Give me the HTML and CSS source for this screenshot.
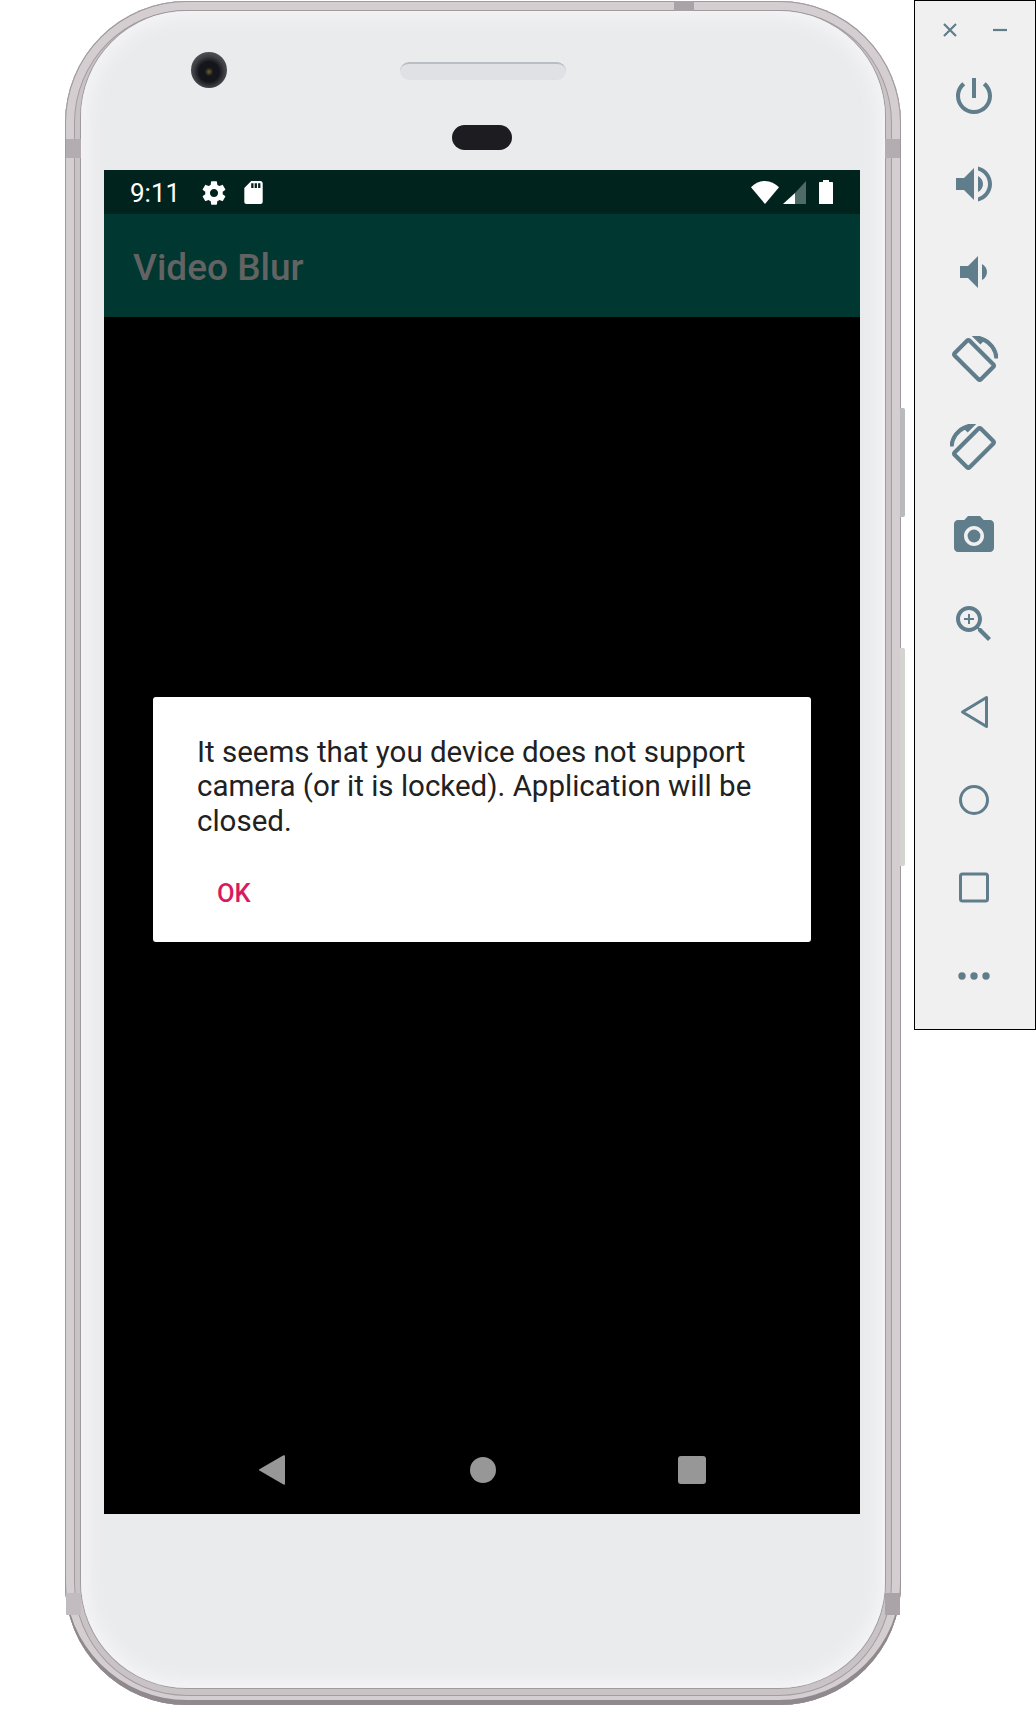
FILE: index.html
```html
<!DOCTYPE html>
<html lang="en">
<head>
    <meta charset="UTF-8">
    <meta name="viewport" content="width=device-width, initial-scale=1.0">
    <title>Video Blur</title>
    <link rel="stylesheet" href="styles.css">
</head>
<body>
    <div class="device">
        <!-- side buttons and antenna bands sit over the frame -->
        <span class="side-btn power-btn"></span>
        <span class="side-btn volume-btn"></span>
        <span class="band band-tl"></span>
        <span class="band band-tr"></span>
        <span class="band band-bl"></span>
        <span class="band band-br"></span>
        <span class="band-top"></span>

        <div class="bezel">
            <div class="bezel-top">
                <span class="camera"></span>
                <span class="speaker"></span>
                <span class="sensor"></span>
            </div>

            <div class="screen">
                <div class="status-bar">
                    <span class="time">9:11</span>
                    <svg class="gear" viewBox="0 0 24 24"><path d="M19.43 12.98c.04-.32.07-.64.07-.98s-.03-.66-.07-.98l2.11-1.65c.19-.15.24-.42.12-.64l-2-3.46c-.12-.22-.39-.3-.61-.22l-2.49 1c-.52-.4-1.08-.73-1.69-.98l-.38-2.65C14.46 2.18 14.25 2 14 2h-4c-.25 0-.46.18-.49.42l-.38 2.65c-.61.25-1.17.59-1.69.98l-2.49-1c-.23-.09-.49 0-.61.22l-2 3.46c-.13.22-.07.49.12.64l2.11 1.65c-.04.32-.07.65-.07.98s.03.66.07.98l-2.11 1.65c-.19.15-.24.42-.12.64l2 3.46c.12.22.39.3.61.22l2.49-1c.52.4 1.08.73 1.69.98l.38 2.65c.03.24.24.42.49.42h4c.25 0 .46-.18.49-.42l.38-2.65c.61-.25 1.17-.59 1.69-.98l2.49 1c.23.09.49 0 .61-.22l2-3.46c.12-.22.07-.49-.12-.64l-2.11-1.65zM12 15.5c-1.93 0-3.5-1.57-3.5-3.5s1.57-3.5 3.5-3.5 3.5 1.57 3.5 3.5-1.57 3.5-3.5 3.5z"/></svg>
                    <svg class="sd" viewBox="4 2 16 20"><path d="M18 2h-8L4.02 8 4 20c0 1.1.9 2 2 2h12c1.1 0 2-.9 2-2V4c0-1.1-.9-2-2-2zm-6 6h-2V4h2v4zm3 0h-2V4h2v4zm3 0h-2V4h2v4z"/></svg>
                    <span class="status-right">
                        <svg class="wifi" viewBox="0 0 28 23"><path d="M14 23 0 6.2C3.8 2.4 8.6 0 14 0s10.2 2.4 14 6.2z"/></svg>
                        <svg class="signal" viewBox="0 0 23 23"><path d="M12 12 0 23h12z"/><path class="signal-off" d="M23 0 12 12v11h11z"/></svg>
                        <svg class="battery" viewBox="0 0 14 24"><path d="M4 2V0h6v2h3c.6 0 1 .4 1 1v21H0V3c0-.6.4-1 1-1z"/></svg>
                    </span>
                </div>
                <div class="app-bar">Video Blur</div>
                <div class="content">
                    <div class="dialog">
                        <p class="dialog-text">It seems that you device does not support camera (or it is locked). Application will be closed.</p>
                        <span class="dialog-btn">OK</span>
                    </div>
                    <div class="nav-bar">
                        <svg class="nav-icon nav-back" viewBox="0 0 26 30"><path d="M24.500 .3 .4 14.300c-.5.3-.5 1 0 1.300l24.100 14c.7.400 1.500 0 1.500-.7V1c0-.7-.8-1.100-1.500-.7z"/></svg>
                        <svg class="nav-icon nav-home" viewBox="0 0 28 28"><circle cx="14" cy="14" r="13"/></svg>
                        <svg class="nav-icon" viewBox="0 0 28 28"><rect width="28" height="28" rx="3"/></svg>
                    </div>
                </div>
            </div>
        </div>
    </div>

    <div class="toolbar">
        <div class="toolbar-head">
            <svg class="head-icon" viewBox="0 0 16 16"><path d="M2 2l12 12M14 2 2 14"/></svg>
            <svg class="head-icon" viewBox="0 0 16 16"><path d="M1 8h14"/></svg>
        </div>
        <!-- power -->
        <svg class="tool-icon" viewBox="0 0 24 24"><path d="M13 3h-2v10h2V3zm4.830 2.170l-1.420 1.420C17.990 7.860 19 9.810 19 12c0 3.870-3.130 7-7 7s-7-3.130-7-7c0-2.190 1.010-4.140 2.580-5.420L6.170 5.170C4.230 6.820 3 9.260 3 12c0 4.970 4.030 9 9 9s9-4.030 9-9c0-2.740-1.230-5.180-3.170-6.830z"/></svg>
        <!-- volume up -->
        <svg class="tool-icon" viewBox="0 0 24 24"><path d="M3 9v6h4l5 5V4L7 9H3zm13.500 3c0-1.770-1.020-3.290-2.500-4.030v8.050c1.480-.73 2.500-2.250 2.500-4.020zM14 3.230v2.060c2.890.86 5 3.540 5 6.710s-2.110 5.850-5 6.710v2.060c4.010-.91 7-4.490 7-8.770s-2.990-7.860-7-8.770z"/></svg>
        <!-- volume down -->
        <svg class="tool-icon" viewBox="0 0 24 24"><path d="M18.500 12c0-1.770-1.020-3.290-2.500-4.030v8.050c1.480-.73 2.500-2.250 2.500-4.020zM5 9v6h4l5 5V4L9 9H5z"/></svg>
        <!-- rotate right -->
        <svg class="tool-icon bold" viewBox="0 0 24 24"><path d="M16.480 2.520c3.270 1.550 5.610 4.720 5.970 8.480h1.500C23.440 4.840 18.290 0 12 0l-.66.030 3.810 3.810 1.330-1.320zm-6.250-.77c-.59-.59-1.540-.59-2.120 0L1.750 8.110c-.59.59-.59 1.540 0 2.120l12.020 12.020c.59.59 1.540.59 2.120 0l6.360-6.360c.59-.59.59-1.540 0-2.120L10.230 1.750zm4.600 19.440L2.810 9.170l6.360-6.360 12.020 12.020-6.360 6.360z"/></svg>
        <!-- rotate left -->
        <svg class="tool-icon bold flip" viewBox="0 0 24 24"><path d="M16.480 2.520c3.270 1.550 5.610 4.720 5.970 8.480h1.500C23.440 4.840 18.290 0 12 0l-.66.030 3.810 3.810 1.330-1.320zm-6.250-.77c-.59-.59-1.540-.59-2.120 0L1.750 8.110c-.59.59-.59 1.540 0 2.120l12.020 12.020c.59.59 1.540.59 2.120 0l6.360-6.360c.59-.59.59-1.540 0-2.120L10.230 1.750zm4.600 19.440L2.810 9.170l6.360-6.360 12.020 12.020-6.360 6.360z"/></svg>
        <!-- screenshot -->
        <svg class="tool-icon" viewBox="0 0 24 24"><circle cx="12" cy="12" r="3.200"/><path d="M9 2 7.170 4H4c-1.100 0-2 .9-2 2v12c0 1.100.9 2 2 2h16c1.100 0 2-.9 2-2V6c0-1.100-.9-2-2-2h-3.170L15 2H9zm3 15c-2.760 0-5-2.240-5-5s2.240-5 5-5 5 2.240 5 5-2.240 5-5 5z"/></svg>
        <!-- zoom -->
        <svg class="tool-icon" viewBox="0 0 24 24"><path d="M15.500 14h-.79l-.28-.27C15.410 12.590 16 11.110 16 9.500 16 5.910 13.090 3 9.500 3S3 5.910 3 9.500 5.910 16 9.500 16c1.610 0 3.090-.59 4.230-1.570l.27.28v.79l5 4.990L20.490 19l-4.990-5zm-6 0C7.010 14 5 11.990 5 9.500S7.010 5 9.500 5 14 7.010 14 9.500 11.990 14 9.500 14z"/><path d="M12 10h-2v2H9v-2H7V9h2V7h1v2h2v1z"/></svg>
        <!-- back, home, overview -->
        <svg class="tool-icon line" viewBox="0 0 48 48"><path d="M36.500 9.500v29L12.500 24z"/></svg>
        <svg class="tool-icon line" viewBox="0 0 48 48"><circle cx="24" cy="24" r="13.500"/></svg>
        <svg class="tool-icon line" viewBox="0 0 48 48"><rect x="10.500" y="10" width="27" height="27" rx="2"/></svg>
        <!-- more -->
        <svg class="tool-icon" viewBox="0 0 48 48"><circle cx="12" cy="24" r="3.700"/><circle cx="24" cy="24" r="3.700"/><circle cx="36" cy="24" r="3.700"/></svg>
    </div>
</body>
</html>
```

FILE: styles.css
```css
body {
    margin: 0;
    height: 1728px;
    background: #fff;
    display: flex;
    align-items: flex-start;
    overflow: hidden;
    font-family: Roboto, "Liberation Sans", sans-serif;
}

/* phone */
.device {
    position: relative;
    box-sizing: border-box;
    width: 836px;
    height: 1704px;
    margin: 1px 13px 0 65px;
    padding: 10px 16px 17px;
    border-radius: 122px;
    background: #c9c3c6;
    box-shadow: inset 0 -5px 0 0 #8f888d, inset 0 0 0 1px #a098a0, inset 0 0 0 9px #d4ced1, inset 0 0 0 10px #a39da1;
}

.bezel {
    box-sizing: border-box;
    height: 100%;
    padding: 0 25px 0 23px;
    border-radius: 106px;
    background: #eaebed;
    box-shadow: 0 0 0 1px #9f9a9e, inset 0 0 18px 6px #f5f5f7;
}

.bezel-top {
    position: relative;
    height: 159px;
}

.camera {
    position: absolute;
    left: 87px;
    top: 41px;
    width: 36px;
    height: 36px;
    border-radius: 50%;
    background: radial-gradient(circle at 50% 55%, #6b6230 0, #15151c 16%, #15151c 38%, #3e3f44 58%, #5d5e62 85%, #7a7b7f 100%);
}

.speaker {
    position: absolute;
    left: 296px;
    top: 51px;
    width: 166px;
    height: 18px;
    box-sizing: border-box;
    border-radius: 9px;
    border-top: 2px solid #b9bdc4;
    background: #e0e1e4;
}

.sensor {
    position: absolute;
    left: 348px;
    top: 114px;
    width: 60px;
    height: 25px;
    border-radius: 13px;
    background: #1c1c21;
}

.side-btn {
    position: absolute;
    left: 835px;
    width: 5px;
    border-radius: 0 2px 2px 0;
}

.power-btn {
    top: 407px;
    height: 109px;
    background: #b9babc;
}

.volume-btn {
    top: 647px;
    height: 218px;
    background: #d3d4d0;
}

.band {
    position: absolute;
    width: 15px;
    height: 19px;
    background: #b3adb1;
}

.band-tl { left: 1px; top: 138px; }
.band-tr { right: 1px; top: 138px; }
.band-bl { left: 1px; top: 1592px; height: 22px; background: #c2bcc0; }
.band-br { right: 1px; top: 1592px; height: 22px; background: #aaa4a8; }

.band-top {
    position: absolute;
    left: 609px;
    top: 0;
    width: 20px;
    height: 10px;
    background: #a9a3a7;
}

/* screen */
.screen {
    display: flex;
    flex-direction: column;
    height: 1344px;
    background: #000;
}

.status-bar {
    display: flex;
    align-items: center;
    flex: none;
    height: 44px;
    padding: 0 27px 0 26px;
    background: #00241d;
    color: #fff;
}

.status-bar svg {
    fill: #fff;
    display: block;
}

.time {
    padding-top: 3px;
    font-size: 26px;
    line-height: 41px;
}

.gear {
    width: 28px;
    height: 28px;
    margin: 1px 0 0 20px;
}

.sd {
    width: 19px;
    height: 23px;
    margin: 1px 0 0 16px;
}

.status-right {
    display: flex;
    align-items: center;
    margin-left: auto;
}

.wifi {
    width: 28px;
    height: 23px;
}

.signal {
    width: 23px;
    height: 23px;
    margin-left: 4px;
}

.status-bar .signal-off {
    fill: #4f6b66;
}

.battery {
    width: 14px;
    height: 24px;
    margin-left: 13px;
}

.app-bar {
    flex: none;
    height: 103px;
    padding-left: 29px;
    background: #003730;
    color: #636363;
    font-size: 37px;
    font-weight: 500;
    line-height: 107px;
}

.content {
    flex: 1;
    display: flex;
    flex-direction: column;
    padding-top: 380px;
}

.dialog {
    box-sizing: border-box;
    width: 658px;
    height: 245px;
    margin-left: 49px;
    padding: 38px 44px 0;
    border-radius: 3px;
    background: #fff;
}

.dialog-text {
    margin: 0;
    font-size: 29.5px;
    line-height: 34.4px;
    color: #212121;
}

.dialog-btn {
    display: block;
    margin: 40px 0 0 20px;
    font-size: 25.5px;
    font-weight: 500;
    line-height: 30px;
    color: #d81b60;
}

.nav-bar {
    display: flex;
    align-items: center;
    justify-content: center;
    gap: 183px;
    margin-top: auto;
    height: 88px;
}

.nav-icon {
    width: 28px;
    height: 28px;
    fill: #979797;
}

.nav-back {
    width: 26px;
    height: 30px;
}

.nav-home {
    margin: 0 -2px 0 1px;
}

/* emulator toolbar */
.toolbar {
    box-sizing: border-box;
    display: flex;
    flex-direction: column;
    align-items: center;
    flex: none;
    gap: 40px;
    width: 122px;
    height: 1030px;
    padding-right: 2px;
    border: 1px solid #000;
    background: #f0f0f0;
}

.toolbar-head {
    display: flex;
    justify-content: center;
    gap: 34px;
    margin: 21px 0 -6px 2px;
}

.head-icon {
    width: 16px;
    height: 16px;
    fill: none;
    stroke: #5f7d8b;
    stroke-width: 2.2;
}

.tool-icon {
    display: block;
    flex: none;
    width: 48px;
    height: 48px;
    fill: #607d8b;
}

.tool-icon.bold {
    stroke: #607d8b;
    stroke-width: .6;
}

.tool-icon.flip {
    transform: scaleX(-1);
}

.tool-icon.line {
    fill: none;
    stroke: #607d8b;
    stroke-width: 3;
    stroke-linejoin: round;
}
```
